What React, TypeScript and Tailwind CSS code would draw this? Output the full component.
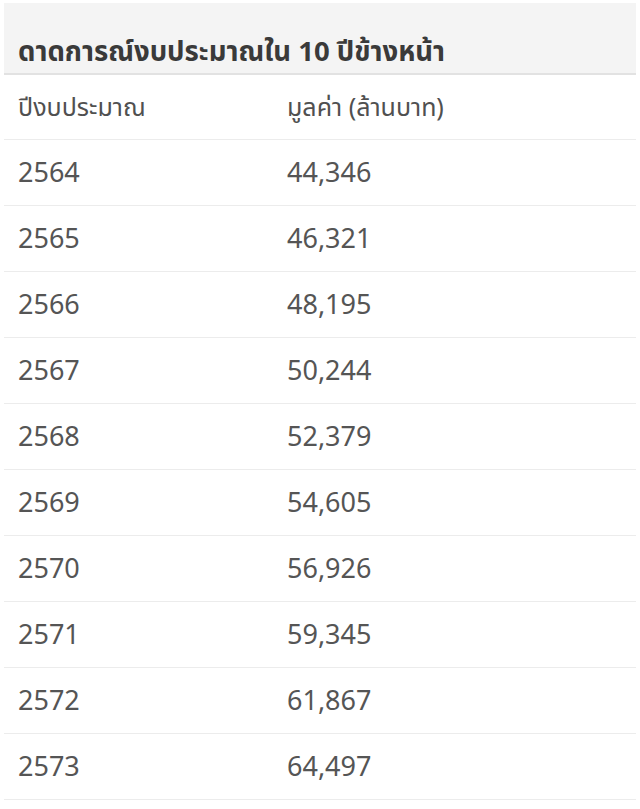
import React from "react";

const rows: [string, string][] = [
  ["2564", "44,346"],
  ["2565", "46,321"],
  ["2566", "48,195"],
  ["2567", "50,244"],
  ["2568", "52,379"],
  ["2569", "54,605"],
  ["2570", "56,926"],
  ["2571", "59,345"],
  ["2572", "61,867"],
  ["2573", "64,497"],
];

export default function App() {
  return (
    <div
      className="w-[640px] h-[809px] bg-white pt-[3px] px-[4px]"
      style={{ fontFamily: '"Noto Sans", "Noto Sans Thai", sans-serif' }}
    >
      <div className="h-[72px] bg-[#f4f4f4] border-b-2 border-[#e2e2e2] flex items-end pb-[4px] pl-[14px]">
        <span className="text-[27.5px] font-bold text-[#3a3a3a] leading-[36px]">ดาดการณ์งบประมาณใน 10 ปีข้างหน้า</span>
      </div>
      <div className="h-[65px] grid grid-cols-[269px_1fr] items-center border-b border-[#ececec] pl-[14px] text-[25px] text-[#505050]">
        <span>ปีงบประมาณ</span>
        <span>มูลค่า (ล้านบาท)</span>
      </div>
      {rows.map(([y, v]) => (
        <div
          key={y}
          className="h-[66px] grid grid-cols-[269px_1fr] items-center border-b border-[#ececec] pl-[14px] text-[27px] text-[#555]"
        >
          <span>{y}</span>
          <span>{v}</span>
        </div>
      ))}
    </div>
  );
}
